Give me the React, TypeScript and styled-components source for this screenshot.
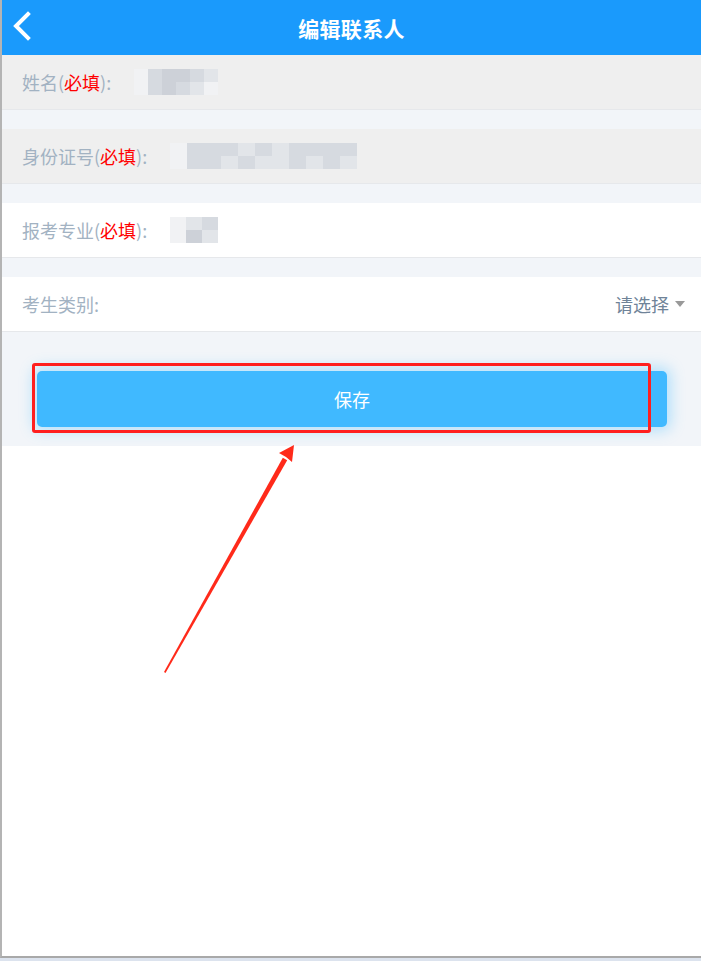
import React from "react";
import styled, { createGlobalStyle } from "styled-components";

const GlobalStyle = createGlobalStyle`
  html, body {
    margin: 0;
    padding: 0;
    background: #dce3ee;
  }
  body {
    font-family: "Noto Sans CJK SC", "Liberation Sans", sans-serif;
  }
`;

type FieldProps = {
  label: string;
  required?: boolean;
  disabled?: boolean;
  mosaic?: number[][];
  mosaicOffset?: number;
  cell?: number;
};

// pixelated placeholders standing in for the redacted values
const nameMosaic = [
  [0, 2, 3, 3, 2, 1],
  [0, 2, 3, 2, 1, 0],
];
const idMosaic = [
  [0, 2, 2, 2, 1, 2, 1, 2, 2, 2, 2],
  [0, 2, 2, 1, 2, 1, 1, 2, 1, 2, 1],
];
const majorMosaic = [
  [0, 1, 2],
  [0, 3, 1],
];

const shades = ["#f1f2f4", "#e2e5e9", "#d6dae0", "#cdd1d8"];

const Field: React.FC<FieldProps> = ({ label, required, disabled, mosaic, mosaicOffset = 0, cell = 16 }) => (
  <FieldRow $disabled={disabled}>
    <Label>
      {label}(
      {required && <Required>必填</Required>}
      ):
    </Label>
    {mosaic && (
      <Mosaic $cols={mosaic[0].length} $cell={cell} $offset={mosaicOffset}>
        {mosaic.flat().map((s, i) => (
          <MosaicCell key={i} $shade={shades[s]} />
        ))}
      </Mosaic>
    )}
  </FieldRow>
);

const App: React.FC = () => {
  return (
    <>
      <GlobalStyle />
      <Frame>
        <Header>
          <BackButton aria-label="back">
            <svg width="20" height="30" viewBox="0 0 20 30">
              <path
                d="M16 3 L4 15 L16 27"
                fill="none"
                stroke="#fff"
                strokeWidth="4"
                strokeLinecap="square"
              />
            </svg>
          </BackButton>
          <Title>编辑联系人</Title>
        </Header>

        <Field label="姓名" required disabled mosaic={nameMosaic} mosaicOffset={36} cell={14} />
        <Spacer />
        <Field label="身份证号" required disabled mosaic={idMosaic} cell={17} />
        <Spacer />
        <Field label="报考专业" required mosaic={majorMosaic} cell={16} />
        <Spacer />
        <SelectRow>
          <SelectLabel>考生类别:</SelectLabel>
          <SelectValue>
            请选择
            <Caret />
          </SelectValue>
        </SelectRow>

        <ButtonSection>
          <SaveButton>保存</SaveButton>
          <Highlight />
        </ButtonSection>

        <ArrowLayer width="160" height="240" viewBox="0 0 160 240">
          <polygon points="12,234 130.8,19.8 135.2,22.2 13.5,235" fill="#ff2a1a" />
          <polygon points="142,7 127,15 134,19 140,24" fill="#ff2a1a" />
        </ArrowLayer>
      </Frame>
    </>
  );
};

const Frame = styled.div`
  position: relative;
  width: 699px;
  height: 956px;
  background: #fff;
  border-left: 2px solid #b4b4b4;
  border-bottom: 2px solid #a9a9a9;
  overflow: hidden;
`;

const Header = styled.div`
  height: 55px;
  background: #1a9afc;
  display: flex;
  align-items: center;
  justify-content: center;
  position: relative;
`;

const BackButton = styled.div`
  position: absolute;
  left: 10px;
  top: 11px;
  display: flex;
`;

const Title = styled.h1`
  margin: 0;
  color: #fff;
  font-size: 21px;
  font-weight: 700;
  letter-spacing: 0.3px;
`;

const FieldRow = styled.div<{ $disabled?: boolean }>`
  height: 54px;
  display: flex;
  align-items: center;
  padding-left: 20px;
  background: ${({ $disabled }) => ($disabled ? "#efefef" : "#fff")};
  border-bottom: 1px solid #e6e8eb;
`;

const Label = styled.span`
  font-size: 18px;
  color: #a2b2c2;
  width: 148px;
  white-space: nowrap;
`;

const Required = styled.span`
  color: #ff0000;
`;

const Mosaic = styled.div<{ $cols: number; $cell: number; $offset: number }>`
  display: grid;
  grid-template-columns: repeat(${({ $cols }) => $cols}, ${({ $cell }) => $cell}px);
  grid-auto-rows: 13px;
  margin-left: ${({ $offset }) => -$offset}px;
  filter: blur(0.6px);
`;

const MosaicCell = styled.div<{ $shade: string }>`
  background: ${({ $shade }) => $shade};
`;

const Spacer = styled.div`
  height: 19px;
  background: #f2f5f9;
`;

const SelectRow = styled.div`
  height: 54px;
  display: flex;
  align-items: center;
  justify-content: space-between;
  padding: 0 16px 0 20px;
  background: #fff;
  border-bottom: 1px solid #e6e8eb;
`;

const SelectLabel = styled.span`
  font-size: 18px;
  color: #a2b2c2;
`;

const SelectValue = styled.span`
  display: flex;
  align-items: center;
  gap: 6px;
  font-size: 18px;
  color: #6f8398;
`;

const Caret = styled.span`
  width: 0;
  height: 0;
  border-left: 5px solid transparent;
  border-right: 5px solid transparent;
  border-top: 6px solid #999;
`;

const ButtonSection = styled.div`
  position: relative;
  background: #f2f5f9;
  padding: 39px 34px 19px 35px;
`;

const SaveButton = styled.div`
  height: 56px;
  border-radius: 5px;
  background: #40b9ff;
  color: #fff;
  font-size: 18px;
  display: flex;
  align-items: center;
  justify-content: center;
  box-shadow: 0 0 14px 4px rgba(64, 185, 255, 0.35);
`;

const Highlight = styled.div`
  position: absolute;
  left: 30px;
  top: 31px;
  width: 613px;
  height: 64px;
  border: 3px solid #ff1f1f;
  border-radius: 3px;
`;

const ArrowLayer = styled.svg`
  position: absolute;
  left: 150px;
  top: 438px;
`;

export default App;
